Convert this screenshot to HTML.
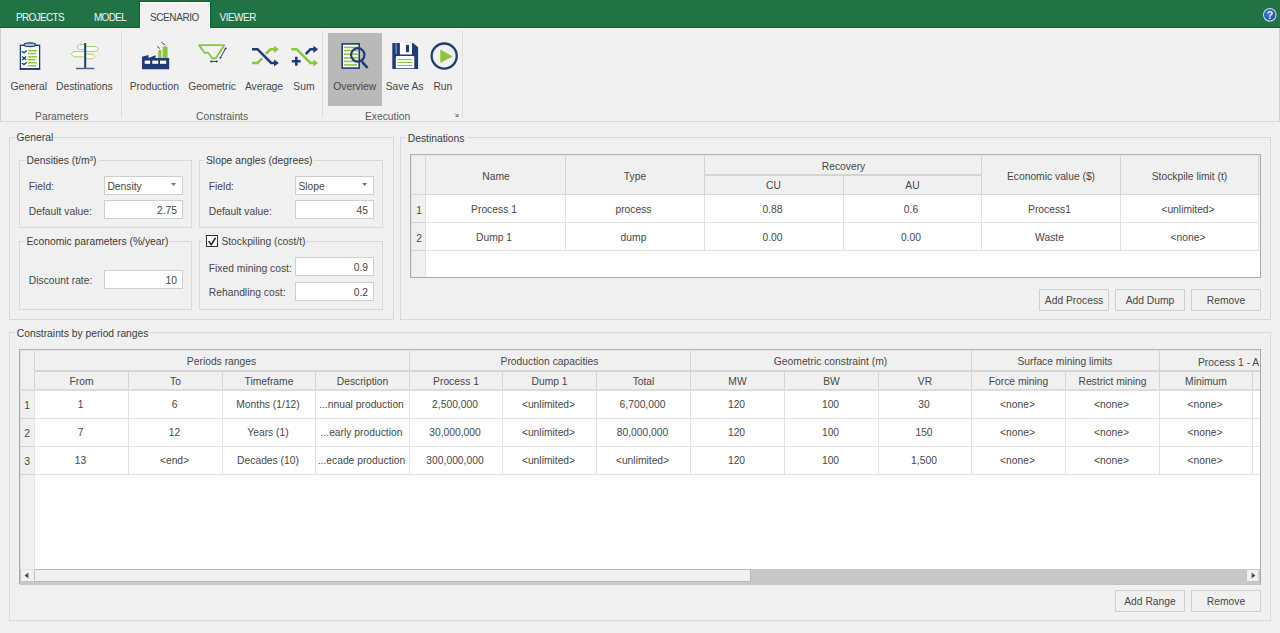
<!DOCTYPE html>
<html><head><meta charset="utf-8"><style>
html,body{margin:0;padding:0;}
body{width:1280px;height:633px;overflow:hidden;position:relative;background:#f0f0f0;font-family:"Liberation Sans",sans-serif;}
.t{position:absolute;white-space:nowrap;line-height:12px;}
.b{position:absolute;box-sizing:border-box;}
svg{position:absolute;overflow:visible;}
</style></head><body>

<div class="b" style="left:0px;top:0px;width:1280px;height:27px;background:#217346;"></div>
<div class="b" style="left:0px;top:27px;width:1280px;height:1px;background:#06662a;"></div>
<div class="b" style="left:139px;top:1px;width:72px;height:27px;background:#06662a;"></div>
<div class="b" style="left:140px;top:2px;width:70px;height:26px;background:#ffffff;"></div>
<div class="b" style="left:141px;top:4px;width:68px;height:24px;background:#f0f0f0;"></div>
<div class="t" style="left:16.00px;top:11.74px;font-size:9.99px;color:#f4f4f4;letter-spacing:-0.65px;">PROJECTS</div>
<div class="t" style="left:94.00px;top:11.74px;font-size:9.99px;color:#f4f4f4;letter-spacing:-0.7px;">MODEL</div>
<div class="t" style="left:150.00px;top:11.74px;font-size:9.99px;color:#3d4a42;letter-spacing:-0.4px;">SCENARIO</div>
<div class="t" style="left:219.50px;top:11.74px;font-size:9.99px;color:#f4f4f4;letter-spacing:-0.5px;">VIEWER</div>
<svg style="left:1262px;top:7px" width="16" height="16" viewBox="0 0 16 16"><defs><radialGradient id="hg" cx="45%" cy="40%" r="60%"><stop offset="0" stop-color="#3d7fe0"/><stop offset="1" stop-color="#1848a8"/></radialGradient></defs><circle cx="7.8" cy="7.8" r="6.9" fill="#0d3d1c" opacity="0.5"/><circle cx="7.8" cy="7.8" r="6.3" fill="url(#hg)" stroke="#d8dde6" stroke-width="1.1"/><text x="7.8" y="11.6" text-anchor="middle" font-family="Liberation Sans" font-weight="bold" font-size="11" fill="#e6e6e6">?</text></svg>
<div class="b" style="left:0px;top:28px;width:1280px;height:94px;background:#f1f1f1;"></div>
<div class="b" style="left:0px;top:28px;width:1px;height:94px;background:#d0d0d0;"></div>
<div class="b" style="left:1279px;top:28px;width:1px;height:94px;background:#d0d0d0;"></div>
<div class="b" style="left:0px;top:121px;width:1280px;height:1px;background:#dadada;"></div>
<div class="b" style="left:121px;top:31px;width:1px;height:87px;background:#dcdcdc;"></div>
<div class="b" style="left:322px;top:31px;width:1px;height:87px;background:#dcdcdc;"></div>
<div class="b" style="left:462px;top:31px;width:1px;height:87px;background:#dcdcdc;"></div>
<div class="b" style="left:328px;top:33px;width:54px;height:73px;background:#b9b9b9;"></div>
<div class="t" style="left:-11.25px;top:80.93px;width:80px;text-align:center;font-size:10.3px;color:#474747;">General</div>
<div class="t" style="left:44.40px;top:80.93px;width:80px;text-align:center;font-size:10.3px;color:#474747;">Destinations</div>
<div class="t" style="left:114.25px;top:80.93px;width:80px;text-align:center;font-size:10.3px;color:#474747;">Production</div>
<div class="t" style="left:172.10px;top:80.93px;width:80px;text-align:center;font-size:10.3px;color:#474747;">Geometric</div>
<div class="t" style="left:224.00px;top:80.93px;width:80px;text-align:center;font-size:10.3px;color:#474747;">Average</div>
<div class="t" style="left:263.90px;top:80.93px;width:80px;text-align:center;font-size:10.3px;color:#474747;">Sum</div>
<div class="t" style="left:314.75px;top:80.93px;width:80px;text-align:center;font-size:10.3px;color:#474747;">Overview</div>
<div class="t" style="left:364.60px;top:80.93px;width:80px;text-align:center;font-size:10.3px;color:#474747;">Save As</div>
<div class="t" style="left:402.90px;top:80.93px;width:80px;text-align:center;font-size:10.3px;color:#474747;">Run</div>
<div class="t" style="left:21.70px;top:110.83px;width:80px;text-align:center;font-size:10.3px;color:#5a5a5a;">Parameters</div>
<div class="t" style="left:182.10px;top:110.83px;width:80px;text-align:center;font-size:10.3px;color:#5a5a5a;">Constraints</div>
<div class="t" style="left:347.60px;top:110.83px;width:80px;text-align:center;font-size:10.3px;color:#5a5a5a;">Execution</div>
<svg style="left:0;top:0" width="1280" height="130">
<!-- General clipboard -->
<rect x="20.4" y="45.3" width="19.2" height="23.6" fill="#fff" stroke="#1f3b78" stroke-width="1.3"/>
<rect x="19.8" y="68" width="20.4" height="1.8" fill="#1f3b78"/>
<ellipse cx="29.9" cy="44.7" rx="5.9" ry="1.9" fill="#b8bcc6" stroke="#1f3b78" stroke-width="1.2"/>
<g stroke="#8cc63f" stroke-width="1.5"><line x1="27.9" y1="50.8" x2="37" y2="50.8"/><line x1="27.9" y1="53.6" x2="36" y2="53.6"/><line x1="27.9" y1="56.8" x2="37" y2="56.8"/><line x1="27.9" y1="59.7" x2="35.5" y2="59.7"/><line x1="27.9" y1="62.7" x2="37" y2="62.7"/><line x1="27.9" y1="65.8" x2="36" y2="65.8"/></g>
<g stroke="#1f3b78" stroke-width="1.3" fill="none"><path d="M21.9 51.2 L24 52.8 L26.7 50.4"/><path d="M22.2 56.6 L26.2 60 M26.2 56.6 L22.2 60"/><path d="M21.9 63 L24 64.6 L26.7 62.2"/></g>
<!-- signpost -->
<g fill="#fff" stroke="#a3d166" stroke-width="1">
<path d="M85 44.6 H79.5 Q77.2 44.6 77.2 47 Q77.2 49.4 79.5 49.4 H85 Z"/>
<path d="M85 46.6 H96.3 L98.7 49 L96.3 51.3 H85 Z"/>
<path d="M85 51.6 H73.7 L71.2 54.2 L73.7 56.8 H85 Z"/>
<path d="M85 54.2 H92.6 L94.8 56.5 L92.6 58.8 H85 Z"/>
</g>
<rect x="84.2" y="43" width="2" height="25.8" fill="#1f3b78"/>
<rect x="76" y="67.8" width="18.3" height="1.4" fill="#4d5b8c"/>
<!-- factory -->
<path d="M142 69.2 V57.9 L142 56.8 L148.5 55 V57.9 L155.5 55.2 V57.9 H169.2 V69.2 Z" fill="#1f3b78"/>
<path d="M158.2 57.9 V50.8 Q159.8 48.6 161.4 50.8 V57.9 Z" fill="#8cc63f"/>
<path d="M162.7 57.9 V47.5 Q165.15 44.6 167.6 47.5 V57.9 Z" fill="#8cc63f"/>
<rect x="144.7" y="60.6" width="5.4" height="3.2" fill="#fff"/><rect x="152.3" y="60.6" width="5.9" height="3.2" fill="#fff"/><rect x="160" y="60.6" width="6.2" height="3.2" fill="#fff"/>
<path d="M157.2 46.6 L159.8 48.5 M161.4 41.8 L162.6 43.4 L164.9 44.7" stroke="#1f3b78" stroke-width="0.9" fill="none"/>
<!-- geometric funnel -->
<path d="M199.1 45.1 H224.2 L215.9 58.3 H212.2 L208.1 52.7 H204.4 Z" fill="none" stroke="#8cc63f" stroke-width="1.9" stroke-linejoin="round"/>
<path d="M225.6 48.4 L220.5 57.7" stroke="#1f3b78" stroke-width="1"/>
<circle cx="225.6" cy="48.4" r="1" fill="#1f3b78"/><circle cx="220.5" cy="57.7" r="1" fill="#1f3b78"/>
<path d="M211.2 61.4 H216.8" stroke="#1f3b78" stroke-width="1"/>
<circle cx="211.2" cy="61.4" r="1" fill="#1f3b78"/><circle cx="216.8" cy="61.4" r="1" fill="#1f3b78"/>
<!-- average shuffle -->
<path d="M252 63 H257.5 L262.2 58.3 M265.9 53.8 L270.6 49.2 H275" fill="none" stroke="#8cc63f" stroke-width="2.6"/>
<path d="M274 45.8 L278.9 49.2 L274 52.9 Z" fill="#8cc63f"/>
<path d="M252 49.2 H257.5 L271.1 63 H275" fill="none" stroke="#1f3b78" stroke-width="2.6"/>
<path d="M274 59.6 L278.9 63 L274 66.4 Z" fill="#1f3b78"/>
<!-- sum -->
<path d="M291.4 49.2 H296.6 L310.4 63 H314" fill="none" stroke="#8cc63f" stroke-width="2.6"/>
<path d="M313.3 59.6 L318.2 63 L313.3 66.4 Z" fill="#8cc63f"/>
<path d="M305.8 54.2 L310.4 49.2 H314" fill="none" stroke="#1f3b78" stroke-width="2.6"/>
<path d="M313.3 45.8 L318.2 49.2 L313.3 52.9 Z" fill="#1f3b78"/>
<path d="M291.9 61.2 H300.6 M296.3 56.8 V65.7" stroke="#1f3b78" stroke-width="2.6"/>
<!-- overview -->
<rect x="342.2" y="43.9" width="17" height="24.2" fill="#fff" stroke="#1f3b78" stroke-width="1.6"/>
<g stroke="#8cc63f" stroke-width="1.6"><line x1="344" y1="47.4" x2="358" y2="47.4"/><line x1="344" y1="50.6" x2="358" y2="50.6"/><line x1="344" y1="54.1" x2="358" y2="54.1"/><line x1="344" y1="57.9" x2="358" y2="57.9"/><line x1="344" y1="61.4" x2="358" y2="61.4"/><line x1="344" y1="64.9" x2="357" y2="64.9"/></g>
<circle cx="357.8" cy="54.9" r="6.7" fill="none" stroke="#1f3b78" stroke-width="2.2"/>
<path d="M362 61.6 L367.5 68" stroke="#1f3b78" stroke-width="2.6"/>
<!-- save -->
<path d="M392.3 42.9 H413.1 L418.1 47.2 V68.9 H392.3 Z" fill="#1f3b78"/>
<rect x="399.9" y="42.9" width="12.1" height="11.6" fill="#fff"/>
<rect x="395.5" y="42.9" width="1.2" height="11" fill="#8c9ab8"/>
<rect x="405.9" y="44.9" width="3.2" height="7.3" fill="#1f3b78"/>
<path d="M395.8 68.3 V57 Q395.8 55.9 397 55.9 H413.1 Q414.3 55.9 414.3 57 V68.3 Z" fill="#fff"/>
<g stroke="#8cc63f" stroke-width="1.1"><line x1="397.5" y1="59.5" x2="412.3" y2="59.5"/><line x1="397.5" y1="62.4" x2="412.3" y2="62.4"/><line x1="397.5" y1="65.5" x2="412.3" y2="65.5"/></g>
<!-- run -->
<circle cx="444.2" cy="56.05" r="12.55" fill="none" stroke="#1f3b78" stroke-width="2.3"/>
<path d="M440.3 49.6 L452.7 56.4 L440.3 62.9 Z" fill="#8cc63f"/>
<path d="M455 113.5 L458 116.5 M458 114 V116.5 H455.5" stroke="#555" stroke-width="0.8" fill="none"/>
</svg>
<div class="b" style="left:9px;top:137px;width:385px;height:183px;border:1px solid #d9d9d9;"></div>
<div class="b" style="left:14.600000000000001px;top:136px;width:38.5px;height:3px;background:#f0f0f0;"></div>
<div class="t" style="left:16.60px;top:132.33px;font-size:10.3px;color:#3b3b3b;">General</div>
<div class="b" style="left:19px;top:160px;width:173px;height:68px;border:1px solid #d9d9d9;"></div>
<div class="b" style="left:24.6px;top:159px;width:74px;height:3px;background:#f0f0f0;"></div>
<div class="t" style="left:26.60px;top:154.53px;font-size:10.3px;color:#3b3b3b;">Densities (t/m&#179;)</div>
<div class="b" style="left:199px;top:160px;width:184px;height:68px;border:1px solid #d9d9d9;"></div>
<div class="b" style="left:204px;top:159px;width:110px;height:3px;background:#f0f0f0;"></div>
<div class="t" style="left:206.00px;top:154.53px;font-size:10.3px;color:#3b3b3b;">Slope angles (degrees)</div>
<div class="b" style="left:19px;top:241px;width:173px;height:69px;border:1px solid #d9d9d9;"></div>
<div class="b" style="left:24.5px;top:240px;width:144px;height:3px;background:#f0f0f0;"></div>
<div class="t" style="left:26.50px;top:236.33px;font-size:10.3px;color:#3b3b3b;">Economic parameters (%/year)</div>
<div class="b" style="left:199px;top:241px;width:184px;height:69px;border:1px solid #d9d9d9;"></div>
<div class="b" style="left:204px;top:240px;width:102px;height:3px;background:#f0f0f0;"></div>
<div class="t" style="left:206.00px;top:236.33px;font-size:10.3px;color:#3b3b3b;"></div>
<div class="b" style="left:203px;top:239px;width:103px;height:4px;background:#f0f0f0;"></div>
<div class="b" style="left:206px;top:235px;width:12px;height:12px;background:#fff;border:1px solid #333;"></div>
<svg style="left:206px;top:235px" width="12" height="12"><path d="M2.6 6.1 L5.2 9.6 L9.6 2.8" fill="none" stroke="#1a1a1a" stroke-width="1.5"/></svg>
<div class="t" style="left:221.40px;top:236.33px;font-size:10.3px;color:#474747;">Stockpiling (cost/t)</div>
<div class="t" style="left:28.80px;top:181.03px;font-size:10.3px;color:#474747;">Field:</div>
<div class="b" style="left:104px;top:176px;width:79px;height:19px;background:#fff;border:1px solid #cfcfcf;"></div>
<div class="t" style="left:107.40px;top:181.33px;font-size:10.3px;color:#474747;">Density</div>
<svg style="left:170.6px;top:182.8px" width="6" height="4"><path d="M0 0 H5.2 L2.6 3.1 Z" fill="#777"/></svg>
<div class="t" style="left:28.80px;top:205.73px;font-size:10.3px;color:#474747;">Default value:</div>
<div class="b" style="left:104px;top:200px;width:79px;height:19px;background:#fff;border:1px solid #cfcfcf;"></div>
<div class="t" style="left:117.00px;top:205.33px;width:60px;text-align:right;font-size:10.3px;color:#474747;">2.75</div>
<div class="t" style="left:208.80px;top:181.03px;font-size:10.3px;color:#474747;">Field:</div>
<div class="b" style="left:295px;top:176px;width:79px;height:19px;background:#fff;border:1px solid #cfcfcf;"></div>
<div class="t" style="left:298.40px;top:181.33px;font-size:10.3px;color:#474747;">Slope</div>
<svg style="left:361.6px;top:182.8px" width="6" height="4"><path d="M0 0 H5.2 L2.6 3.1 Z" fill="#777"/></svg>
<div class="t" style="left:208.80px;top:205.73px;font-size:10.3px;color:#474747;">Default value:</div>
<div class="b" style="left:295px;top:200px;width:79px;height:19px;background:#fff;border:1px solid #cfcfcf;"></div>
<div class="t" style="left:308.00px;top:205.33px;width:60px;text-align:right;font-size:10.3px;color:#474747;">45</div>
<div class="t" style="left:28.80px;top:274.83px;font-size:10.3px;color:#474747;">Discount rate:</div>
<div class="b" style="left:104px;top:270px;width:79px;height:19px;background:#fff;border:1px solid #cfcfcf;"></div>
<div class="t" style="left:117.00px;top:275.33px;width:60px;text-align:right;font-size:10.3px;color:#474747;">10</div>
<div class="t" style="left:208.80px;top:262.73px;font-size:10.3px;color:#474747;">Fixed mining cost:</div>
<div class="b" style="left:295px;top:257px;width:79px;height:19px;background:#fff;border:1px solid #cfcfcf;"></div>
<div class="t" style="left:308.00px;top:262.33px;width:60px;text-align:right;font-size:10.3px;color:#474747;">0.9</div>
<div class="t" style="left:208.80px;top:286.93px;font-size:10.3px;color:#474747;">Rehandling cost:</div>
<div class="b" style="left:295px;top:282px;width:79px;height:19px;background:#fff;border:1px solid #cfcfcf;"></div>
<div class="t" style="left:308.00px;top:287.33px;width:60px;text-align:right;font-size:10.3px;color:#474747;">0.2</div>
<div class="b" style="left:400px;top:137px;width:871px;height:183px;border:1px solid #d9d9d9;"></div>
<div class="b" style="left:405.8px;top:136px;width:61px;height:3px;background:#f0f0f0;"></div>
<div class="t" style="left:407.80px;top:132.73px;font-size:10.3px;color:#3b3b3b;">Destinations</div>
<div class="b" style="left:410px;top:154px;width:851px;height:124px;background:#fff;border-left:1px solid #a9a9a9;border-top:1px solid #b4b4b4;border-right:1px solid #a9a9a9;border-bottom:1px solid #a9a9a9;"></div>
<div class="b" style="left:411px;top:155px;width:849px;height:40px;background:#f0f0f0;"></div>
<div class="b" style="left:411px;top:155px;width:14px;height:122px;background:#f0f0f0;"></div>
<div class="b" style="left:425px;top:155px;width:1px;height:40px;background:#d4d4d4;"></div>
<div class="b" style="left:565px;top:155px;width:1px;height:40px;background:#d4d4d4;"></div>
<div class="b" style="left:704px;top:155px;width:1px;height:40px;background:#d4d4d4;"></div>
<div class="b" style="left:843px;top:176px;width:1px;height:19px;background:#d4d4d4;"></div>
<div class="b" style="left:981px;top:155px;width:1px;height:40px;background:#d4d4d4;"></div>
<div class="b" style="left:1120px;top:155px;width:1px;height:40px;background:#d4d4d4;"></div>
<div class="b" style="left:1258px;top:155px;width:1px;height:40px;background:#d4d4d4;"></div>
<div class="b" style="left:425px;top:195px;width:1px;height:55px;background:#e2e2e2;"></div>
<div class="b" style="left:565px;top:195px;width:1px;height:55px;background:#e2e2e2;"></div>
<div class="b" style="left:704px;top:195px;width:1px;height:55px;background:#e2e2e2;"></div>
<div class="b" style="left:843px;top:195px;width:1px;height:55px;background:#e2e2e2;"></div>
<div class="b" style="left:981px;top:195px;width:1px;height:55px;background:#e2e2e2;"></div>
<div class="b" style="left:1120px;top:195px;width:1px;height:55px;background:#e2e2e2;"></div>
<div class="b" style="left:1258px;top:195px;width:1px;height:55px;background:#e2e2e2;"></div>
<div class="b" style="left:425px;top:250px;width:1px;height:27px;background:#e2e2e2;"></div>
<div class="b" style="left:704px;top:174px;width:277px;height:2px;background:#d4d4d4;"></div>
<div class="b" style="left:411px;top:194px;width:848px;height:1px;background:#d8d8d8;"></div>
<div class="b" style="left:411px;top:155px;width:848px;height:1px;background:#e4e4e4;"></div>
<div class="b" style="left:411px;top:155px;width:1px;height:122px;background:#e4e4e4;"></div>
<div class="b" style="left:411px;top:222px;width:848px;height:1px;background:#e2e2e2;"></div>
<div class="b" style="left:411px;top:250px;width:848px;height:1px;background:#e2e2e2;"></div>
<div class="b" style="left:411px;top:222px;width:14px;height:1px;background:#d4d4d4;"></div>
<div class="b" style="left:411px;top:250px;width:14px;height:1px;background:#d4d4d4;"></div>
<div class="t" style="left:431.00px;top:170.83px;width:130px;text-align:center;font-size:10.3px;color:#474747;">Name</div>
<div class="t" style="left:570.00px;top:170.83px;width:130px;text-align:center;font-size:10.3px;color:#474747;">Type</div>
<div class="t" style="left:778.50px;top:160.83px;width:130px;text-align:center;font-size:10.3px;color:#474747;">Recovery</div>
<div class="t" style="left:708.50px;top:180.13px;width:130px;text-align:center;font-size:10.3px;color:#474747;">CU</div>
<div class="t" style="left:847.50px;top:180.13px;width:130px;text-align:center;font-size:10.3px;color:#474747;">AU</div>
<div class="t" style="left:986.00px;top:170.83px;width:130px;text-align:center;font-size:10.3px;color:#474747;">Economic value ($)</div>
<div class="t" style="left:1124.50px;top:170.83px;width:130px;text-align:center;font-size:10.3px;color:#474747;">Stockpile limit (t)</div>
<div class="t" style="left:409.00px;top:204.53px;width:20px;text-align:center;font-size:10.3px;color:#474747;">1</div>
<div class="t" style="left:426.00px;top:203.53px;width:136px;text-align:center;font-size:10.3px;color:#474747;">Process 1</div>
<div class="t" style="left:565.50px;top:203.53px;width:136px;text-align:center;font-size:10.3px;color:#474747;">process</div>
<div class="t" style="left:704.50px;top:203.53px;width:136px;text-align:center;font-size:10.3px;color:#474747;">0.88</div>
<div class="t" style="left:843.00px;top:203.53px;width:136px;text-align:center;font-size:10.3px;color:#474747;">0.6</div>
<div class="t" style="left:981.50px;top:203.53px;width:136px;text-align:center;font-size:10.3px;color:#474747;">Process1</div>
<div class="t" style="left:1120.00px;top:203.53px;width:136px;text-align:center;font-size:10.3px;color:#474747;">&lt;unlimited&gt;</div>
<div class="t" style="left:409.00px;top:232.53px;width:20px;text-align:center;font-size:10.3px;color:#474747;">2</div>
<div class="t" style="left:426.00px;top:231.53px;width:136px;text-align:center;font-size:10.3px;color:#474747;">Dump 1</div>
<div class="t" style="left:565.50px;top:231.53px;width:136px;text-align:center;font-size:10.3px;color:#474747;">dump</div>
<div class="t" style="left:704.50px;top:231.53px;width:136px;text-align:center;font-size:10.3px;color:#474747;">0.00</div>
<div class="t" style="left:843.00px;top:231.53px;width:136px;text-align:center;font-size:10.3px;color:#474747;">0.00</div>
<div class="t" style="left:981.50px;top:231.53px;width:136px;text-align:center;font-size:10.3px;color:#474747;">Waste</div>
<div class="t" style="left:1120.00px;top:231.53px;width:136px;text-align:center;font-size:10.3px;color:#474747;">&lt;none&gt;</div>
<div class="b" style="left:1039px;top:289px;width:70px;height:22px;background:#f0f0f0;border:1px solid #cfcfcf;"></div><div class="t" style="left:1039.50px;top:294.83px;width:69px;text-align:center;font-size:10.3px;color:#474747;">Add Process</div>
<div class="b" style="left:1115px;top:289px;width:70px;height:22px;background:#f0f0f0;border:1px solid #cfcfcf;"></div><div class="t" style="left:1115.50px;top:294.83px;width:69px;text-align:center;font-size:10.3px;color:#474747;">Add Dump</div>
<div class="b" style="left:1191px;top:289px;width:70px;height:22px;background:#f0f0f0;border:1px solid #cfcfcf;"></div><div class="t" style="left:1191.50px;top:294.83px;width:69px;text-align:center;font-size:10.3px;color:#474747;">Remove</div>
<div class="b" style="left:9px;top:332px;width:1262px;height:289px;border:1px solid #d9d9d9;"></div>
<div class="b" style="left:14.8px;top:331px;width:134px;height:3px;background:#f0f0f0;"></div>
<div class="t" style="left:16.80px;top:328.13px;font-size:10.3px;color:#3b3b3b;">Constraints by period ranges</div>
<div class="b" style="left:19px;top:349px;width:1242px;height:235px;background:#fff;border-left:1px solid #a9a9a9;border-top:1px solid #b4b4b4;border-right:1px solid #a9a9a9;border-bottom:1px solid #a9a9a9;"></div>
<div class="b" style="left:20px;top:350px;width:1240px;height:1px;background:#e2e2e2;"></div>
<div class="b" style="left:20px;top:350px;width:1px;height:233px;background:#e2e2e2;"></div>
<div class="b" style="left:21px;top:351px;width:1239px;height:39px;background:#f0f0f0;"></div>
<div class="b" style="left:21px;top:351px;width:13px;height:218px;background:#f0f0f0;"></div>
<div class="b" style="left:34px;top:351px;width:1px;height:39px;background:#d4d4d4;"></div>
<div class="b" style="left:128px;top:371px;width:1px;height:19px;background:#d4d4d4;"></div>
<div class="b" style="left:222px;top:371px;width:1px;height:19px;background:#d4d4d4;"></div>
<div class="b" style="left:315px;top:371px;width:1px;height:19px;background:#d4d4d4;"></div>
<div class="b" style="left:409px;top:351px;width:1px;height:39px;background:#d4d4d4;"></div>
<div class="b" style="left:502px;top:371px;width:1px;height:19px;background:#d4d4d4;"></div>
<div class="b" style="left:596px;top:371px;width:1px;height:19px;background:#d4d4d4;"></div>
<div class="b" style="left:690px;top:351px;width:1px;height:39px;background:#d4d4d4;"></div>
<div class="b" style="left:784px;top:371px;width:1px;height:19px;background:#d4d4d4;"></div>
<div class="b" style="left:878px;top:371px;width:1px;height:19px;background:#d4d4d4;"></div>
<div class="b" style="left:971px;top:351px;width:1px;height:39px;background:#d4d4d4;"></div>
<div class="b" style="left:1065px;top:371px;width:1px;height:19px;background:#d4d4d4;"></div>
<div class="b" style="left:1159px;top:351px;width:1px;height:39px;background:#d4d4d4;"></div>
<div class="b" style="left:1252px;top:371px;width:1px;height:19px;background:#d4d4d4;"></div>
<div class="b" style="left:34px;top:390px;width:1px;height:84px;background:#e2e2e2;"></div>
<div class="b" style="left:128px;top:390px;width:1px;height:84px;background:#e2e2e2;"></div>
<div class="b" style="left:222px;top:390px;width:1px;height:84px;background:#e2e2e2;"></div>
<div class="b" style="left:315px;top:390px;width:1px;height:84px;background:#e2e2e2;"></div>
<div class="b" style="left:409px;top:390px;width:1px;height:84px;background:#e2e2e2;"></div>
<div class="b" style="left:502px;top:390px;width:1px;height:84px;background:#e2e2e2;"></div>
<div class="b" style="left:596px;top:390px;width:1px;height:84px;background:#e2e2e2;"></div>
<div class="b" style="left:690px;top:390px;width:1px;height:84px;background:#e2e2e2;"></div>
<div class="b" style="left:784px;top:390px;width:1px;height:84px;background:#e2e2e2;"></div>
<div class="b" style="left:878px;top:390px;width:1px;height:84px;background:#e2e2e2;"></div>
<div class="b" style="left:971px;top:390px;width:1px;height:84px;background:#e2e2e2;"></div>
<div class="b" style="left:1065px;top:390px;width:1px;height:84px;background:#e2e2e2;"></div>
<div class="b" style="left:1159px;top:390px;width:1px;height:84px;background:#e2e2e2;"></div>
<div class="b" style="left:1252px;top:390px;width:1px;height:84px;background:#e2e2e2;"></div>
<div class="b" style="left:34px;top:474px;width:1px;height:95px;background:#e2e2e2;"></div>
<div class="b" style="left:34px;top:370px;width:1226px;height:2px;background:#d4d4d4;"></div>
<div class="b" style="left:21px;top:389px;width:1239px;height:2px;background:#dcdcdc;"></div>
<div class="b" style="left:35px;top:418px;width:1225px;height:1px;background:#e2e2e2;"></div>
<div class="b" style="left:20px;top:418px;width:14px;height:1px;background:#d4d4d4;"></div>
<div class="b" style="left:35px;top:446px;width:1225px;height:1px;background:#e2e2e2;"></div>
<div class="b" style="left:20px;top:446px;width:14px;height:1px;background:#d4d4d4;"></div>
<div class="b" style="left:35px;top:474px;width:1225px;height:1px;background:#e2e2e2;"></div>
<div class="b" style="left:20px;top:474px;width:14px;height:1px;background:#d4d4d4;"></div>
<div class="t" style="left:121.50px;top:355.83px;width:200px;text-align:center;font-size:10.3px;color:#474747;">Periods ranges</div>
<div class="t" style="left:449.50px;top:355.83px;width:200px;text-align:center;font-size:10.3px;color:#474747;">Production capacities</div>
<div class="t" style="left:730.50px;top:355.83px;width:200px;text-align:center;font-size:10.3px;color:#474747;">Geometric constraint (m)</div>
<div class="t" style="left:965.00px;top:355.83px;width:200px;text-align:center;font-size:10.3px;color:#474747;">Surface mining limits</div>
<div style="position:absolute;left:1160px;top:351px;width:99px;height:19px;overflow:hidden"><div class="t" style="left:38.00px;top:5.83px;font-size:10.3px;color:#474747;">Process 1 - Average</div></div>
<div class="t" style="left:35.50px;top:376.03px;width:92px;text-align:center;font-size:10.3px;color:#474747;">From</div>
<div class="t" style="left:129.50px;top:376.03px;width:92px;text-align:center;font-size:10.3px;color:#474747;">To</div>
<div class="t" style="left:223.00px;top:376.03px;width:92px;text-align:center;font-size:10.3px;color:#474747;">Timeframe</div>
<div class="t" style="left:316.50px;top:376.03px;width:92px;text-align:center;font-size:10.3px;color:#474747;">Description</div>
<div class="t" style="left:410.00px;top:376.03px;width:92px;text-align:center;font-size:10.3px;color:#474747;">Process 1</div>
<div class="t" style="left:503.50px;top:376.03px;width:92px;text-align:center;font-size:10.3px;color:#474747;">Dump 1</div>
<div class="t" style="left:597.50px;top:376.03px;width:92px;text-align:center;font-size:10.3px;color:#474747;">Total</div>
<div class="t" style="left:691.50px;top:376.03px;width:92px;text-align:center;font-size:10.3px;color:#474747;">MW</div>
<div class="t" style="left:785.50px;top:376.03px;width:92px;text-align:center;font-size:10.3px;color:#474747;">BW</div>
<div class="t" style="left:879.00px;top:376.03px;width:92px;text-align:center;font-size:10.3px;color:#474747;">VR</div>
<div class="t" style="left:972.50px;top:376.03px;width:92px;text-align:center;font-size:10.3px;color:#474747;">Force mining</div>
<div class="t" style="left:1066.50px;top:376.03px;width:92px;text-align:center;font-size:10.3px;color:#474747;">Restrict mining</div>
<div class="t" style="left:1160.00px;top:376.03px;width:92px;text-align:center;font-size:10.3px;color:#474747;">Minimum</div>
<div class="t" style="left:17.00px;top:400.13px;width:20px;text-align:center;font-size:10.3px;color:#474747;">1</div>
<div class="t" style="left:34.50px;top:399.33px;width:92px;text-align:center;font-size:10.3px;color:#474747;">1</div>
<div class="t" style="left:128.50px;top:399.33px;width:92px;text-align:center;font-size:10.3px;color:#474747;">6</div>
<div class="t" style="left:222.00px;top:399.33px;width:92px;text-align:center;font-size:10.3px;color:#474747;">Months (1/12)</div>
<div class="t" style="left:315.50px;top:399.33px;width:92px;text-align:center;font-size:10.3px;color:#474747;">...nnual production</div>
<div class="t" style="left:409.00px;top:399.33px;width:92px;text-align:center;font-size:10.3px;color:#474747;">2,500,000</div>
<div class="t" style="left:502.50px;top:399.33px;width:92px;text-align:center;font-size:10.3px;color:#474747;">&lt;unlimited&gt;</div>
<div class="t" style="left:596.50px;top:399.33px;width:92px;text-align:center;font-size:10.3px;color:#474747;">6,700,000</div>
<div class="t" style="left:690.50px;top:399.33px;width:92px;text-align:center;font-size:10.3px;color:#474747;">120</div>
<div class="t" style="left:784.50px;top:399.33px;width:92px;text-align:center;font-size:10.3px;color:#474747;">100</div>
<div class="t" style="left:878.00px;top:399.33px;width:92px;text-align:center;font-size:10.3px;color:#474747;">30</div>
<div class="t" style="left:971.50px;top:399.33px;width:92px;text-align:center;font-size:10.3px;color:#474747;">&lt;none&gt;</div>
<div class="t" style="left:1065.50px;top:399.33px;width:92px;text-align:center;font-size:10.3px;color:#474747;">&lt;none&gt;</div>
<div class="t" style="left:1159.00px;top:399.33px;width:92px;text-align:center;font-size:10.3px;color:#474747;">&lt;none&gt;</div>
<div class="t" style="left:17.00px;top:428.13px;width:20px;text-align:center;font-size:10.3px;color:#474747;">2</div>
<div class="t" style="left:34.50px;top:427.33px;width:92px;text-align:center;font-size:10.3px;color:#474747;">7</div>
<div class="t" style="left:128.50px;top:427.33px;width:92px;text-align:center;font-size:10.3px;color:#474747;">12</div>
<div class="t" style="left:222.00px;top:427.33px;width:92px;text-align:center;font-size:10.3px;color:#474747;">Years (1)</div>
<div class="t" style="left:315.50px;top:427.33px;width:92px;text-align:center;font-size:10.3px;color:#474747;">...early production</div>
<div class="t" style="left:409.00px;top:427.33px;width:92px;text-align:center;font-size:10.3px;color:#474747;">30,000,000</div>
<div class="t" style="left:502.50px;top:427.33px;width:92px;text-align:center;font-size:10.3px;color:#474747;">&lt;unlimited&gt;</div>
<div class="t" style="left:596.50px;top:427.33px;width:92px;text-align:center;font-size:10.3px;color:#474747;">80,000,000</div>
<div class="t" style="left:690.50px;top:427.33px;width:92px;text-align:center;font-size:10.3px;color:#474747;">120</div>
<div class="t" style="left:784.50px;top:427.33px;width:92px;text-align:center;font-size:10.3px;color:#474747;">100</div>
<div class="t" style="left:878.00px;top:427.33px;width:92px;text-align:center;font-size:10.3px;color:#474747;">150</div>
<div class="t" style="left:971.50px;top:427.33px;width:92px;text-align:center;font-size:10.3px;color:#474747;">&lt;none&gt;</div>
<div class="t" style="left:1065.50px;top:427.33px;width:92px;text-align:center;font-size:10.3px;color:#474747;">&lt;none&gt;</div>
<div class="t" style="left:1159.00px;top:427.33px;width:92px;text-align:center;font-size:10.3px;color:#474747;">&lt;none&gt;</div>
<div class="t" style="left:17.00px;top:456.13px;width:20px;text-align:center;font-size:10.3px;color:#474747;">3</div>
<div class="t" style="left:34.50px;top:455.33px;width:92px;text-align:center;font-size:10.3px;color:#474747;">13</div>
<div class="t" style="left:128.50px;top:455.33px;width:92px;text-align:center;font-size:10.3px;color:#474747;">&lt;end&gt;</div>
<div class="t" style="left:222.00px;top:455.33px;width:92px;text-align:center;font-size:10.3px;color:#474747;">Decades (10)</div>
<div class="t" style="left:315.50px;top:455.33px;width:92px;text-align:center;font-size:10.3px;color:#474747;">...ecade production</div>
<div class="t" style="left:409.00px;top:455.33px;width:92px;text-align:center;font-size:10.3px;color:#474747;">300,000,000</div>
<div class="t" style="left:502.50px;top:455.33px;width:92px;text-align:center;font-size:10.3px;color:#474747;">&lt;unlimited&gt;</div>
<div class="t" style="left:596.50px;top:455.33px;width:92px;text-align:center;font-size:10.3px;color:#474747;">&lt;unlimited&gt;</div>
<div class="t" style="left:690.50px;top:455.33px;width:92px;text-align:center;font-size:10.3px;color:#474747;">120</div>
<div class="t" style="left:784.50px;top:455.33px;width:92px;text-align:center;font-size:10.3px;color:#474747;">100</div>
<div class="t" style="left:878.00px;top:455.33px;width:92px;text-align:center;font-size:10.3px;color:#474747;">1,500</div>
<div class="t" style="left:971.50px;top:455.33px;width:92px;text-align:center;font-size:10.3px;color:#474747;">&lt;none&gt;</div>
<div class="t" style="left:1065.50px;top:455.33px;width:92px;text-align:center;font-size:10.3px;color:#474747;">&lt;none&gt;</div>
<div class="t" style="left:1159.00px;top:455.33px;width:92px;text-align:center;font-size:10.3px;color:#474747;">&lt;none&gt;</div>
<div class="b" style="left:1252px;top:390px;width:1px;height:84px;background:#e2e2e2;"></div>
<div class="b" style="left:1260px;top:340px;width:10px;height:250px;background:#f0f0f0;"></div>
<div class="b" style="left:1260px;top:349px;width:1px;height:236px;background:#a9a9a9;"></div>
<div class="b" style="left:20px;top:569px;width:1240px;height:16px;background:#c8c8c8;"></div>
<div class="b" style="left:21px;top:569px;width:14px;height:13px;background:#f0f0f0;border:1px solid #c4c4c4;border-left-color:#e8e8e8;border-top-color:#e0e0e0;"></div>
<svg style="left:24px;top:572px" width="6" height="8"><path d="M4.4 0.6 V6.6 L0.5 3.6 Z" fill="#505050"/></svg>
<div class="b" style="left:35px;top:569px;width:716px;height:13px;background:#f0f0f0;border:1px solid #b9b9b9;border-left:none;border-radius:0 2px 2px 0;"></div>
<div class="b" style="left:1246px;top:569px;width:13px;height:13px;background:#f0f0f0;border:1px solid #c4c4c4;border-right-color:#d8d8d8;"></div>
<svg style="left:1251px;top:572px" width="6" height="8"><path d="M0.6 0.6 V6.6 L4.5 3.6 Z" fill="#505050"/></svg>
<div class="b" style="left:20px;top:584px;width:1240px;height:1px;background:#c4c4c4;"></div>
<div class="b" style="left:1115px;top:590px;width:70px;height:22px;background:#f0f0f0;border:1px solid #cfcfcf;"></div><div class="t" style="left:1115.50px;top:595.83px;width:69px;text-align:center;font-size:10.3px;color:#474747;">Add Range</div>
<div class="b" style="left:1191px;top:590px;width:70px;height:22px;background:#f0f0f0;border:1px solid #cfcfcf;"></div><div class="t" style="left:1191.50px;top:595.83px;width:69px;text-align:center;font-size:10.3px;color:#474747;">Remove</div>
</body></html>
